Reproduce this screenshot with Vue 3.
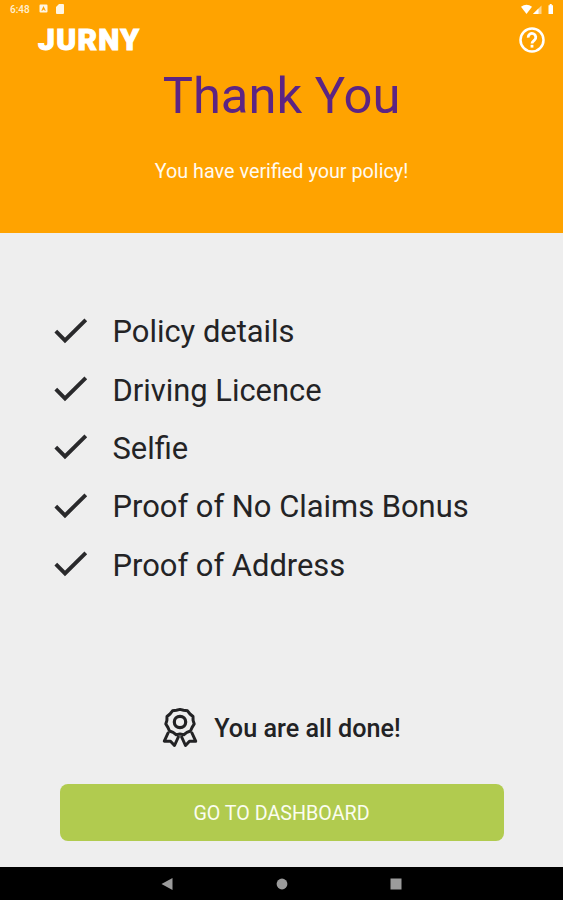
<script setup>
const steps = [
  'Policy details',
  'Driving Licence',
  'Selfie',
  'Proof of No Claims Bonus',
  'Proof of Address'
]
</script>

<template>
  <div class="screen">
    <header class="hero">
      <div class="status">
        <span class="clock">6:48</span>
        <svg class="status-app" viewBox="0 0 9 9" width="9" height="9">
          <path fill="#fff6e4" fill-rule="evenodd" d="M1.5 0.5h6a1 1 0 0 1 1 1v6a1 1 0 0 1-1 1h-6a1 1 0 0 1-1-1v-6a1 1 0 0 1 1-1zM4.5 2L2.3 6.8h1.2l.4-1h1.4l.4 1h1.1z" />
        </svg>
        <svg class="status-card" viewBox="0 0 8 10" width="8" height="10">
          <path fill="#fff6e4" d="M3 0h4q1 0 1 1v8q0 1-1 1H1q-1 0-1-1V3z" />
        </svg>
        <svg class="status-right" viewBox="0 0 34 12" width="34" height="12">
          <path fill="#fff" d="M0 2.8q5.5-4 11 0L5.500 10z" />
          <path fill="#ffd58a" d="M20.500 1.500v8.500h-8.500z" />
          <path fill="#fff" d="M17.500 4.500v5.500h-5.500z" />
          <path fill="#fff" d="M27.500 1.200h1.200V0h2v1.200H32V10h-4.500z" />
        </svg>
      </div>
      <div class="brand-row">
        <span class="brand">JURNY</span>
        <svg class="help" viewBox="0 0 26 26" width="26" height="26" fill="none" stroke="#fff">
          <circle cx="13" cy="13" r="11.500" stroke-width="2.500" />
          <path d="M9.200 10.600a3.800 3.800 0 1 1 6.200 2.600c-1.500 1.200-2.400 1.700-2.400 3.200" stroke-width="2.800" />
          <path d="M13 17.800v2.800" stroke-width="2.800" />
        </svg>
      </div>
      <h1 class="title">Thank You</h1>
      <p class="subtitle">You have verified your policy!</p>
    </header>

    <main class="content">
      <ul class="steps">
        <li v-for="step in steps" :key="step" class="step">
          <svg class="check" viewBox="0 0 34 27" width="34" height="27" fill="none" stroke="#29292b" stroke-width="3.900">
            <path d="M1.800 13.200L11 22.400L31.800 1.800" />
          </svg>
          <span class="label">{{ step }}</span>
        </li>
      </ul>

      <div class="done">
        <svg class="award" viewBox="0 0 36 42" width="36" height="42" fill="none" stroke="#222224" stroke-width="3" stroke-linejoin="round">
          <path d="M18 2.400L21.600 3.200L25.500 3.800L28 7L31 9.500L31.100 13.400L32.200 17L30.100 20.400L28.500 24L24.900 25.400L21.800 27.700L18 27.100L14.200 27.700L11.100 25.400L7.500 24L5.900 20.400L3.800 17L4.900 13.400L5 9.500L8 7L10.500 3.800L14.400 3.200Z" />
          <circle cx="18" cy="15" r="5.700" stroke-width="3.200" />
          <path d="M6.500 25L2.300 34.200L8.500 34.200L12.500 38.500L16.800 29M19.200 29L23.500 38.500L27.500 34.200L33.700 34.200L29.500 25" />
        </svg>
        <span class="done-text">You are all done!</span>
      </div>

      <button class="dashboard" type="button">GO TO DASHBOARD</button>
    </main>

    <nav class="nav">
      <svg viewBox="0 0 12 12" width="12" height="12"><path fill="#9b9b9b" d="M11.500 0v12L0.500 6z" /></svg>
      <svg viewBox="0 0 12 12" width="12" height="12"><circle fill="#9b9b9b" cx="6" cy="6" r="5.400" /></svg>
      <svg viewBox="0 0 12 12" width="12" height="12"><rect fill="#9b9b9b" x="0.500" y="0.500" width="11" height="11" /></svg>
    </nav>
  </div>
</template>

<style>
body {
  margin: 0;
}
</style>

<style scoped>
.screen {
  display: flex;
  flex-direction: column;
  width: 563px;
  height: 900px;
  overflow: hidden;
  background: #eeeeee;
  font-family: Roboto, "Liberation Sans", sans-serif;
}
.hero {
  box-sizing: border-box;
  height: 233px;
  background: #ffa300;
  color: #fff;
}
.status {
  display: flex;
  align-items: flex-start;
  height: 24px;
  padding: 4px 8px 0 10px;
  box-sizing: border-box;
}
.clock {
  width: 29px;
  font-size: 10px;
  line-height: 11px;
  font-weight: 500;
  color: #fff0d2;
}
.status-app {
  margin-right: 8px;
}
.status-right {
  margin-left: auto;
}
.brand-row {
  display: flex;
  justify-content: space-between;
  align-items: center;
  height: 32px;
  padding: 0 18px 0 38px;
}
.brand {
  font-size: 30px;
  line-height: 32px;
  font-weight: 900;
  letter-spacing: 1.300px;
  -webkit-text-stroke: 1px #fff;
}
.title {
  margin: 10px 0 0;
  font-size: 50.700px;
  line-height: 60px;
  font-weight: 400;
  text-align: center;
  color: #5c2483;
}
.subtitle {
  margin: 34px 0 0;
  font-size: 19.800px;
  line-height: 24px;
  text-align: center;
  color: #fffaf0;
}
.content {
  display: flex;
  flex-direction: column;
  align-items: center;
  height: 634px;
}
.steps {
  width: 100%;
  margin: 70px 0 0;
  padding: 0 0 0 54px;
  box-sizing: border-box;
  list-style: none;
}
.step {
  display: flex;
  align-items: center;
  gap: 24.500px;
  height: 58.400px;
}
.check {
  position: relative;
  top: -1px;
}
.label {
  font-size: 30.900px;
  line-height: 40px;
  font-weight: 400;
  color: #232325;
}
.done {
  display: flex;
  align-items: center;
  gap: 16px;
  height: 42px;
  margin-top: 112px;
}
.done-text {
  padding-top: 3px;
  font-size: 25.200px;
  line-height: 32px;
  font-weight: 500;
  color: #222224;
}
.dashboard {
  width: 444px;
  height: 57px;
  margin: 35px 0 0;
  padding: 3px 0 0;
  border: 0;
  border-radius: 8px;
  background: #b1cb4f;
  color: #fbfdf0;
  font-family: inherit;
  font-size: 19.700px;
  line-height: 24px;
}
.nav {
  box-sizing: border-box;
  display: flex;
  justify-content: space-between;
  align-items: center;
  height: 33px;
  padding: 0 161px;
  background: #000;
}
</style>
